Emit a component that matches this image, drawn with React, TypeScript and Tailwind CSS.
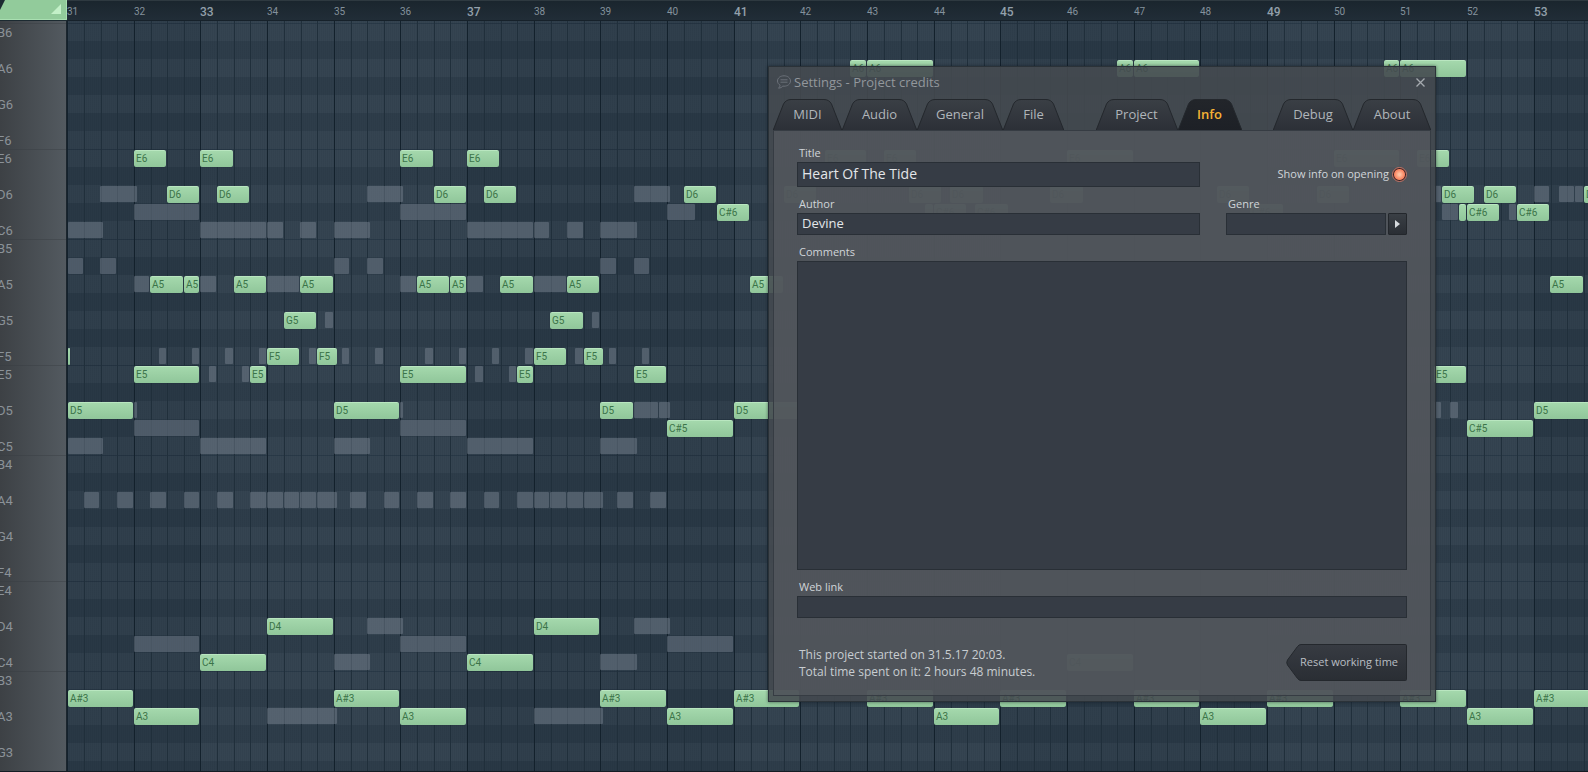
import { useEffect, useState } from "react";
import { clsx } from "clsx";

const BAR_WIDTH = 66.66;
const FIRST_BAR = 31;
const KEYS_WIDTH = 67;
const RULER_HEIGHT = 21;
const ROW_HEIGHT = 18;
const TOP_PITCH = 95; // B6
const FIRST_ROW_TOP = 2;

const NAMES = ["C", "C#", "D", "D#", "E", "F", "F#", "G", "G#", "A", "A#", "B"];

const pitchName = (pitch: number) =>
  `${NAMES[pitch % 12]}${Math.floor(pitch / 12) - 1}`;
const isBlack = (pitch: number) => NAMES[pitch % 12].length === 2;

// [bar, sixteenth tick inside the bar, length in ticks]
type Hit = [number, number, number];

const NOTES: Record<string, Hit[]> = {
  A6: [[42, 12, 4], [43, 0, 16], [46, 12, 4], [47, 0, 16], [50, 12, 4], [51, 0, 16]],
  E6: [
    [32, 0, 8], [33, 0, 8], [36, 0, 8], [37, 0, 8], [42, 6, 10], [43, 4, 8],
    [46, 0, 16], [50, 0, 16], [51, 4, 8],
  ],
  D6: [
    [32, 8, 8], [33, 4, 8], [36, 8, 8], [37, 4, 8], [40, 4, 8], [41, 12, 8],
    [43, 10, 8], [44, 4, 8], [45, 12, 8], [48, 4, 8], [49, 12, 8], [51, 10, 8],
    [52, 4, 8], [53, 12, 8],
  ],
  "C#6": [
    [40, 12, 8], [43, 14, 2], [44, 0, 8], [44, 10, 8], [48, 12, 8], [51, 14, 2],
    [52, 0, 8], [52, 12, 8],
  ],
  A5: [
    [32, 4, 8], [32, 12, 4], [33, 8, 8], [34, 8, 8], [36, 4, 8], [36, 12, 4],
    [37, 8, 8], [38, 8, 8], [41, 4, 8], [53, 4, 8],
  ],
  G5: [[34, 4, 8], [38, 4, 8]],
  F5: [[31, 0, 1], [34, 0, 8], [34, 12, 5], [38, 0, 8], [38, 12, 5]],
  E5: [[32, 0, 16], [33, 12, 4], [36, 0, 16], [37, 12, 4], [39, 8, 8], [51, 8, 8]],
  D5: [[31, 0, 16], [35, 0, 16], [39, 0, 8], [41, 0, 16], [53, 0, 16]],
  "C#5": [[40, 0, 16], [52, 0, 16]],
  D4: [[34, 0, 16], [38, 0, 16]],
  C4: [[33, 0, 16], [37, 0, 16], [46, 0, 16]],
  "A#3": [
    [31, 0, 16], [35, 0, 16], [39, 0, 16], [41, 0, 16], [43, 0, 16], [45, 0, 16],
    [47, 0, 16], [49, 0, 16], [51, 0, 16], [53, 0, 16],
  ],
  A3: [[32, 0, 16], [36, 0, 16], [40, 0, 16], [44, 0, 16], [48, 0, 16], [52, 0, 16]],
};

// notes of the other channels
const GHOSTS: Record<string, Hit[]> = {
  D6: [
    [31, 8, 9], [35, 8, 9], [39, 8, 9], [51, 8, 2], [53, 0, 4], [53, 6, 4], [53, 10, 2],
  ],
  "C#6": [[32, 0, 16], [36, 0, 16], [40, 0, 7], [51, 10, 4], [52, 10, 2]],
  C6: [
    [31, 0, 9], [33, 0, 16], [34, 0, 4], [34, 8, 4], [35, 0, 9], [37, 0, 16],
    [38, 0, 4], [38, 8, 4], [39, 0, 9],
  ],
  "A#5": [[31, 0, 4], [31, 8, 4], [35, 0, 4], [35, 8, 4], [39, 0, 4], [39, 8, 4]],
  A5: [[32, 0, 4], [33, 0, 4], [34, 0, 8], [36, 0, 4], [37, 0, 4], [38, 0, 8]],
  G5: [[34, 14, 2], [38, 14, 2]],
  F5: [
    [32, 6, 2], [32, 14, 2], [33, 6, 2], [33, 14, 2], [34, 10, 2], [35, 2, 2],
    [35, 10, 2], [36, 6, 2], [36, 14, 2], [37, 6, 2], [37, 14, 2], [38, 10, 2],
    [39, 2, 2], [39, 10, 2],
  ],
  E5: [[33, 2, 2], [33, 10, 2], [37, 2, 2], [37, 10, 2]],
  D5: [[32, 0, 1], [36, 0, 1], [39, 8, 6], [39, 14, 3], [51, 8, 2], [51, 12, 2]],
  "C#5": [[32, 0, 16], [36, 0, 16]],
  C5: [[31, 0, 9], [33, 0, 16], [35, 0, 9], [37, 0, 16], [39, 0, 9]],
  A4: [
    [31, 4, 4], [31, 12, 4], [32, 4, 4], [32, 12, 4], [33, 4, 4], [33, 12, 4],
    [34, 0, 4], [34, 4, 4], [34, 8, 4], [34, 12, 5], [35, 4, 4], [35, 12, 4],
    [36, 4, 4], [36, 12, 4], [37, 4, 4], [37, 12, 4], [38, 0, 4], [38, 4, 4],
    [38, 8, 4], [38, 12, 5], [39, 4, 4], [39, 12, 4],
  ],
  D4: [[35, 8, 9], [39, 8, 9]],
  "C#4": [[32, 0, 16], [36, 0, 16], [40, 0, 16]],
  C4: [[35, 0, 9], [39, 0, 9]],
  A3: [[34, 0, 17], [38, 0, 17]],
};

function barX(bar: number, tick = 0) {
  return Math.round((bar - FIRST_BAR + tick / 16) * BAR_WIDTH);
}

function hitBox(pitch: number, [bar, tick, length]: Hit) {
  const left = Math.max(1, barX(bar, tick));
  return {
    left,
    top: FIRST_ROW_TOP + (TOP_PITCH - pitch) * ROW_HEIGHT + 1,
    width: barX(bar, tick + length) - left - 1,
  };
}

// bars and pitches that fit in the window
function useVisibleRange() {
  const [size, setSize] = useState({ w: window.innerWidth, h: window.innerHeight });

  useEffect(() => {
    const onResize = () => setSize({ w: window.innerWidth, h: window.innerHeight });
    window.addEventListener("resize", onResize);
    return () => window.removeEventListener("resize", onResize);
  }, []);

  const barCount = Math.ceil((size.w - KEYS_WIDTH) / BAR_WIDTH);
  const rowCount = Math.min(
    84,
    Math.ceil((size.h - RULER_HEIGHT - FIRST_ROW_TOP) / ROW_HEIGHT),
  );
  return {
    bars: Array.from({ length: barCount }, (_, i) => FIRST_BAR + i),
    pitches: Array.from({ length: rowCount }, (_, i) => TOP_PITCH - i),
  };
}

function Ruler({ bars }: { bars: number[] }) {
  return (
    <div className="relative h-[21px] grow overflow-hidden border-b border-[#16212a] bg-linear-to-b from-[#1a252d] to-[#212d37] shadow-[inset_0_1px_0_#2e3940]">
      {bars.map((bar) => (
        <span
          key={bar}
          className={clsx(
            "absolute top-1 leading-4",
            bar % 4 === 1
              ? "text-[12px] font-medium text-[#93a0ab]"
              : "text-[10px] text-[#84919c]",
          )}
          style={{ left: barX(bar) }}
        >
          {bar}
        </span>
      ))}
    </div>
  );
}

function Keys({ pitches }: { pitches: number[] }) {
  return (
    <div className="w-[67px] shrink-0 overflow-hidden border-r border-[#1c262e] bg-linear-to-r from-[#3d4145] to-[#535a60] pt-[2px]">
      {pitches.map((pitch) => (
        <div
          key={pitch}
          className={clsx(
            "-ml-[3px] h-[18px] border-t text-[13px] leading-[18px] text-[#8b9298]",
            NAMES[pitch % 12] === "E" || NAMES[pitch % 12] === "B"
              ? "border-[#363c41]/40"
              : "border-transparent",
          )}
        >
          {!isBlack(pitch) && pitchName(pitch)}
        </div>
      ))}
    </div>
  );
}

function Grid({ bars, pitches }: { bars: number[]; pitches: number[] }) {
  return (
    <div className="relative grow overflow-hidden bg-[#303f4c]">
      <div className="pt-[2px]">
        {pitches.map((pitch) => (
          <div
            key={pitch}
            className={clsx(
              "h-[18px] border-t",
              isBlack(pitch)
                ? "border-[#293845] bg-[#293845]"
                : NAMES[pitch % 12] === "E" || NAMES[pitch % 12] === "B"
                  ? "border-[#243341] bg-[#303f4c]"
                  : "border-[#303f4c] bg-[#303f4c]",
            )}
          />
        ))}
      </div>
      {bars.map((bar) => (
        <div
          key={bar}
          className={clsx(
            "absolute inset-y-0 flex border-l border-[#13212c]",
            Math.floor((bar - 1) / 4) % 2 === 0 && "bg-[#8ba0ad]/6",
          )}
          style={{ left: barX(bar), width: barX(bar + 1) - barX(bar) }}
        >
          {[0, 1, 2, 3].map((beat) => (
            <div
              key={beat}
              className={clsx(
                "grow bg-[repeating-linear-gradient(90deg,transparent_0_1px,rgba(16,28,40,0.07)_1px_2px)]",
                beat > 0 && "border-l border-[#202f3b]",
              )}
            />
          ))}
        </div>
      ))}
      {pitches.flatMap((pitch) =>
        (GHOSTS[pitchName(pitch)] ?? []).map((hit) => (
          <div
            key={`${pitch}-${hit[0]}-${hit[1]}`}
            className="absolute h-4 rounded-[1px] bg-[#7c8894]/45"
            style={hitBox(pitch, hit)}
          />
        )),
      )}
      {pitches.flatMap((pitch) =>
        (NOTES[pitchName(pitch)] ?? []).map((hit) => (
          <div
            key={`${pitch}-${hit[0]}-${hit[1]}`}
            className="absolute h-[17px] overflow-hidden rounded-[2px] border-t border-[#b9e6c0] bg-linear-to-b from-[#a4d8ac] to-[#90c69a] pl-[2px] text-[10px] leading-4 text-[#3c7449] shadow-[0_0_1px_#14222c]"
            style={hitBox(pitch, hit)}
          >
            {hit[2] > 2 && pitchName(pitch)}
          </div>
        )),
      )}
    </div>
  );
}

const TAB_GROUPS = [
  [
    { label: "MIDI", width: "w-[69px]" },
    { label: "Audio", width: "w-[75px]" },
    { label: "General", width: "w-[86px]" },
    { label: "File", width: "w-[61px]" },
  ],
  [
    { label: "Project", width: "w-[82px]" },
    { label: "Info", width: "w-[64px]" },
  ],
  [
    { label: "Debug", width: "w-[80px]" },
    { label: "About", width: "w-[78px]" },
  ],
];

function TabEdge({ active, flip }: { active: boolean; flip?: boolean }) {
  const id = `edge-${active ? "on" : "off"}-${flip ? "r" : "l"}`;
  return (
    <svg
      viewBox="0 0 18 31"
      className={clsx("h-[31px] w-[18px] shrink-0", flip && "-scale-x-100")}
      aria-hidden="true"
    >
      <defs>
        <linearGradient id={id} x1="0" y1="0" x2="0" y2="1">
          <stop offset="0" stopColor={active ? "#22252a" : "#3a3f45"} />
          <stop offset="1" stopColor={active ? "#1d2026" : "#2c3037"} />
        </linearGradient>
      </defs>
      <path d="M0 31L10.500 5Q13 .5 18 .5V31Z" fill={`url(#${id})`} />
      <path d="M.3 31L10.500 5Q13 .5 18 .5" fill="none" stroke="#24282d" />
    </svg>
  );
}

function Tabs() {
  return (
    <nav className="flex justify-between px-[4px]">
      {TAB_GROUPS.map((group, i) => (
        <div key={i} className="flex">
          {group.map(({ label, width }) => {
            const active = label === "Info";
            return (
              <button key={label} type="button" className={clsx("flex h-[31px]", width)}>
                <TabEdge active={active} />
                <span
                  className={clsx(
                    "flex h-full min-w-0 grow justify-center border-t border-[#24282d] bg-linear-to-b text-[13px] leading-7 whitespace-nowrap",
                    active
                      ? "from-[#22252a] to-[#1d2026] font-semibold text-[#f5b235]"
                      : "from-[#3a3f45] to-[#2c3037] text-[#b0b5ba]",
                  )}
                >
                  {label}
                </span>
                <TabEdge active={active} flip />
              </button>
            );
          })}
        </div>
      ))}
    </nav>
  );
}

const labelClass = "block pl-[2px] text-[11px] leading-4 font-medium text-[#d0d5d9]";
const fieldClass =
  "block w-full border border-[#292f36] bg-[#363c45] px-1 text-[#e3e6e9] outline-none";

function SettingsDialog() {
  return (
    <section
      aria-label="Settings"
      className="absolute top-[66px] left-[768px] w-[668px] border border-[#2b3238] bg-[#454a50]/89 pb-[5px] font-['Open_Sans',sans-serif] shadow-[0_0_3px_rgba(10,18,26,0.6)]"
    >
      <header className="flex h-8 items-center pr-[9px] pb-[2px] pl-[7px]">
        <svg viewBox="0 0 16 16" className="size-4" fill="none" stroke="#6b7179" aria-hidden="true">
          <path d="M8 1.800C4.300 1.800 1.500 4 1.500 7c0 1.800 1 3.200 2.600 4.200-.1 1.300-.7 2.200-1.600 3 1.900-.1 3.300-.9 4.300-2.100l1.200.1c3.700 0 6.500-2.200 6.500-5.200S11.700 1.800 8 1.800Z" />
          <path d="M4.500 5.800h7M4.500 8.200h7" />
        </svg>
        <h1 className="pl-[2px] text-[13px] leading-5 text-[#92979c]">
          Settings - Project credits
        </h1>
        <button type="button" aria-label="Close" className="ml-auto">
          <svg viewBox="0 0 11 11" className="size-[11px]" stroke="#a5aaaf" strokeWidth="1.300">
            <path d="M1.500 1.500l8 8M9.500 1.500l-8 8" />
          </svg>
        </button>
      </header>
      <Tabs />
      <form className="mx-[4px] border border-[#363c43] bg-[#555a60]/70 px-[23px] pt-[14px] pb-[14px]">
        <div className="flex gap-[26px]">
          <div className="grow">
            <label htmlFor="title" className={labelClass}>Title</label>
            <input
              id="title"
              defaultValue="Heart Of The Tide"
              className={clsx(fieldClass, "mt-px h-[25px] pb-[2px] text-[14px]")}
            />
            <label htmlFor="author" className={clsx(labelClass, "mt-[9px]")}>Author</label>
            <input
              id="author"
              defaultValue="Devine"
              className={clsx(fieldClass, "mt-px h-[22px] pb-[2px] text-[13px]")}
            />
          </div>
          <div className="flex w-[181px] flex-col justify-between">
            <label className="mt-[21px] flex items-center justify-end gap-[3px] text-[11px] leading-4 whitespace-nowrap text-[#d0d5d9]">
              Show info on opening
              <input
                type="checkbox"
                defaultChecked
                className="size-[15px] appearance-none rounded-full border border-[#c07466] bg-[radial-gradient(circle,#ffc0a0_0_1px,#f8825f_5px,#3a2224_6px,#4b3030_7px)]"
              />
            </label>
            <div>
              <label htmlFor="genre" className={labelClass}>Genre</label>
              <div className="mt-px flex gap-[2px]">
                <input id="genre" className={clsx(fieldClass, "h-[22px] min-w-0 text-[13px]")} />
                <button
                  type="button"
                  aria-label="Choose genre"
                  className="flex h-[22px] w-[19px] shrink-0 items-center justify-center rounded-[1px] border border-[#23272c] bg-linear-to-b from-[#3a3f45] to-[#2a2e34]"
                >
                  <svg viewBox="0 0 5 8" className="h-2 w-[5px]" fill="#d5d9dd">
                    <path d="M0 0l5 4-5 4Z" />
                  </svg>
                </button>
              </div>
            </div>
          </div>
        </div>
        <label htmlFor="comments" className={clsx(labelClass, "mt-[9px]")}>Comments</label>
        <textarea
          id="comments"
          className={clsx(fieldClass, "mt-px h-[309px] resize-none text-[13px]")}
        />
        <label htmlFor="link" className={clsx(labelClass, "mt-[9px]")}>Web link</label>
        <input id="link" className={clsx(fieldClass, "mt-px h-[22px] text-[13px]")} />
        <div className="mt-[26px] flex items-center justify-between">
          <p className="pl-[2px] text-[12px] leading-[17px] text-[#c8cdd1]">
            This project started on 31.5.17 20:03.
            <br />
            Total time spent on it: 2 hours 48 minutes.
          </p>
          <button type="button" className="flex h-[37px] text-[11px] text-[#b9bec3]">
            <svg viewBox="0 0 16 37" className="h-[37px] w-4" aria-hidden="true">
              <defs>
                <linearGradient id="reset" x1="0" y1="0" x2="0" y2="1">
                  <stop offset="0" stopColor="#373b42" />
                  <stop offset="1" stopColor="#2a2e34" />
                </linearGradient>
              </defs>
              <path d="M16 .5H15Q13 .5 11.500 2.500L1.500 16Q0 18.500 1.500 21L11.500 34.500Q13 36.500 15 36.500H16Z" fill="url(#reset)" />
              <path d="M16 .5H15Q13 .5 11.500 2.500L1.500 16Q0 18.500 1.500 21L11.500 34.500Q13 36.500 15 36.500H16" fill="none" stroke="#24282d" />
            </svg>
            <span className="flex h-full w-[105px] items-center justify-center rounded-r-[2px] border-y border-r border-[#24282d] bg-linear-to-b from-[#373b42] to-[#2a2e34] pr-[10px] whitespace-nowrap">
              Reset working time
            </span>
          </button>
        </div>
      </form>
    </section>
  );
}

export default function App() {
  const { bars, pitches } = useVisibleRange();

  return (
    <main className="relative flex h-screen flex-col overflow-hidden border-b border-[#141c24] bg-[#303f4c] font-[Roboto,sans-serif]">
      <div className="flex shrink-0">
        <svg viewBox="0 0 67 21" className="h-[21px] w-[67px] shrink-0" aria-hidden="true">
          <path d="M0 0H67V21H0Z" fill="#1c2a31" />
          <path d="M5 0H67V20H0V10Z" fill="#92cb9b" />
          <path d="M0 19.500H66.500V0" fill="none" stroke="#a9dfb1" />
          <path d="M61 4V14H51Z" fill="#c3f0c8" />
        </svg>
        <Ruler bars={bars} />
      </div>
      <div className="flex min-h-0 grow">
        <Keys pitches={pitches} />
        <Grid bars={bars} pitches={pitches} />
      </div>
      <SettingsDialog />
    </main>
  );
}
